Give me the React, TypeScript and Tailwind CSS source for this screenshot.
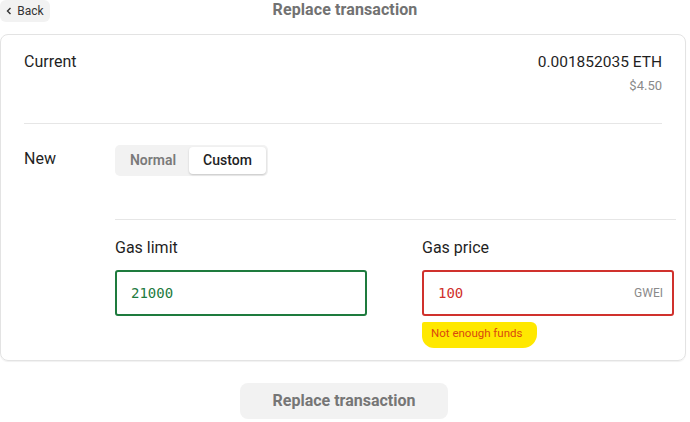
import React from "react";

export default function App() {
  return (
    <div
      className="w-[690px] h-[422px] bg-white text-[#1f1f1f] overflow-hidden"
      style={{ fontFamily: "Roboto, 'Liberation Sans', sans-serif" }}
    >
      {/* header */}
      <div className="h-[34px] grid grid-cols-[1fr_auto_1fr] items-start">
        <div>
          <button className="h-[22px] w-[50px] rounded-[6px] bg-[#f2f2f2] text-[12px] leading-[22px] text-[#333] flex items-center justify-center gap-[5px]">
            <svg width="6" height="8" viewBox="0 0 6 8" fill="none">
              <path d="M4.5 1L1.5 4L4.5 7" stroke="#333" strokeWidth="1.4" />
            </svg>
            <span>Back</span>
          </button>
        </div>
        <div className="text-[16px] leading-[20px] font-bold text-[#727272] tracking-[0.1px]">
          Replace transaction
        </div>
        <div />
      </div>

      {/* card */}
      <div className="mr-[4px] h-[327px] border border-[#e3e3e3] rounded-[8px] shadow-[0_1px_1px_rgba(0,0,0,0.06)]">
        <div className="flex justify-between pl-[23px] pr-[23px] pt-[17px]">
          <div className="text-[16px] leading-[20px]">Current</div>
          <div className="text-right">
            <div className="text-[15.5px] leading-[20px]">0.001852035 ETH</div>
            <div className="text-[13px] leading-[20px] mt-[4px] text-[#8a8a8a]">$4.50</div>
          </div>
        </div>
        <div className="mt-[27px] mx-[23px] h-px bg-[#e6e6e6]" />

        <div className="flex items-start pl-[23px] mt-[21px]">
          <div className="w-[91px] text-[16px] leading-[20px] mt-[4px]">New</div>
          <div className="flex h-[31px] rounded-[5px] bg-[#f2f2f2] p-[2px]">
            <div className="w-[72px] flex items-center justify-center text-[14px] font-semibold text-[#7a7a7a]">
              Normal
            </div>
            <div className="w-[77px] flex items-center justify-center text-[14px] font-medium text-[#1f1f1f] bg-white rounded-[4px] shadow-[0_1px_2px_rgba(0,0,0,0.18)]">
              Custom
            </div>
          </div>
        </div>

        <div className="mt-[43px] ml-[114px] mr-[9px] h-px bg-[#e6e6e6]" />

        <div className="ml-[114px] mr-[11px] mt-[18px] grid grid-cols-2 gap-x-[55px]">
          <div>
            <div className="text-[16px] leading-[20px]">Gas limit</div>
            <div className="mt-[12px] h-[46px] border-2 border-[#1e7b3e] rounded-[3px] flex items-center px-[14px]">
              <span
                className="text-[14px] text-[#1e7b3e]"
                style={{ fontFamily: "'DejaVu Sans Mono', monospace" }}
              >
                21000
              </span>
            </div>
          </div>
          <div>
            <div className="text-[16px] leading-[20px]">Gas price</div>
            <div className="mt-[12px] h-[46px] border-2 border-[#d0312d] rounded-[3px] flex items-center justify-between pl-[14px] pr-[9px]">
              <span
                className="text-[14px] text-[#d0312d]"
                style={{ fontFamily: "'DejaVu Sans Mono', monospace" }}
              >
                100
              </span>
              <span className="text-[12px] text-[#8a8a8a]">GWEI</span>
            </div>
            <div className="mt-[6px] flex">
              <span className="bg-[#ffe800] text-[#d9480f] text-[11.5px] leading-[16px] pl-[9px] pr-[15px] pt-[3px] pb-[7px] rounded-[2px_6px_14px_12px]">
                Not enough funds
              </span>
            </div>
          </div>
        </div>
      </div>

      {/* bottom button */}
      <div className="flex justify-center mt-[22px] pr-[2px]">
        <button className="w-[208px] h-[36px] rounded-[8px] bg-[#f2f2f2] text-[16px] font-bold text-[#767676]">
          Replace transaction
        </button>
      </div>
    </div>
  );
}
